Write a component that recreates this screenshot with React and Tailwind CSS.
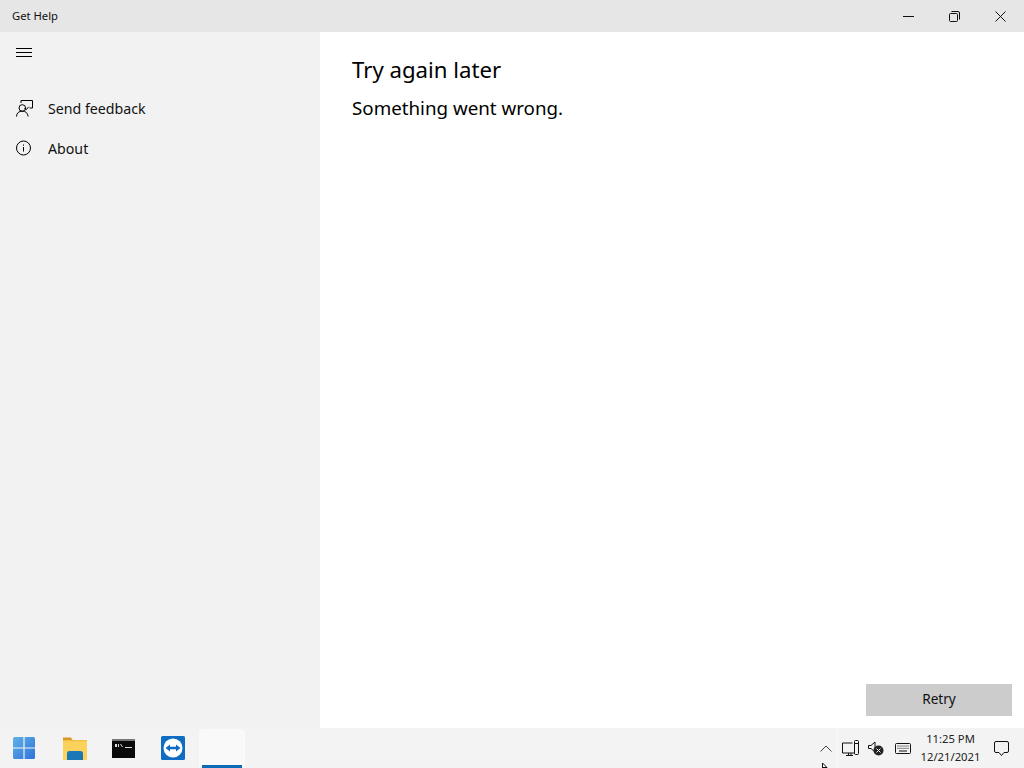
import React from "react";

const font = { fontFamily: '"Noto Sans", "Open Sans", sans-serif' };

function Hamburger() {
  return (
    <svg width="16" height="12" viewBox="0 0 16 12" fill="none" stroke="#000" strokeWidth="1">
      <path d="M0 1.5h16M0 5.5h16M0 9.5h16" />
    </svg>
  );
}

function FeedbackIcon() {
  return (
    <svg width="17" height="17" viewBox="0 0 17 17" fill="none" stroke="#000" strokeWidth="1">
      <path d="M5 3V.5h11.5V8h-3" />
      <path d="M8.5 8.2l1.6 1.6 2.6-3" />
      <circle cx="6.3" cy="8" r="3.3" />
      <path d="M.5 16.5c0-3.4 2.5-5.4 5.8-5.4s5.5 2 5.8 5.4" />
    </svg>
  );
}

function InfoIcon() {
  return (
    <svg width="16" height="16" viewBox="0 0 16 16" fill="none" stroke="#000" strokeWidth="1">
      <circle cx="7.5" cy="8" r="7" />
      <path d="M7.5 7v4.5M7.5 4.5v1.2" />
    </svg>
  );
}

function NavItem({ icon, label }) {
  return (
    <div className="flex items-center h-10 pl-4">
      <div className="w-8 flex items-center">{icon}</div>
      <span className="pt-[2px] text-[14.2px] text-[#111]">{label}</span>
    </div>
  );
}

function WinButtons() {
  return (
    <div className="flex items-center h-full pr-px">
      <div className="w-[46px] flex justify-center">
        <svg width="11" height="11" viewBox="0 0 11 11" stroke="#111" fill="none"><path d="M0 5.5h11" /></svg>
      </div>
      <div className="w-[46px] flex justify-center">
        <svg width="11" height="11" viewBox="0 0 11 11" stroke="#111" fill="none">
          <rect x=".5" y="2.5" width="8" height="8" rx="1" />
          <path d="M2.5 .5h6.5a1.5 1.5 0 0 1 1.5 1.5v6.5" />
        </svg>
      </div>
      <div className="w-[46px] flex justify-center">
        <svg width="11" height="11" viewBox="0 0 11 11" stroke="#111" fill="none"><path d="M.5 .5l10 10M10.5 .5l-10 10" /></svg>
      </div>
    </div>
  );
}

function StartIcon() {
  return (
    <svg width="22" height="22" viewBox="0 0 22 22" className="mr-[2px]">
      <defs>
        <linearGradient id="startGrad" x1="0" y1="0" x2="1" y2="1">
          <stop offset="0" stopColor="#5fb2e8" />
          <stop offset="1" stopColor="#2f72d8" />
        </linearGradient>
      </defs>
      <rect width="22" height="22" rx="1.5" fill="url(#startGrad)" />
      <path d="M11 0v22M0 11h22" stroke="#f3f3f3" strokeWidth="1.2" />
    </svg>
  );
}

function FolderIcon() {
  return (
    <svg width="24" height="23" viewBox="0 0 24 23" className="ml-[1px]">
      <path d="M0 .5h8l1.5 2.5H0z" fill="#d9991f" />
      <rect y="3" width="24" height="20" fill="#fbd25c" />
      <path d="M0 3h24v1.5H0z" fill="#f0c24a" />
      <path d="M4 23v-6.5q0-2.5 2.5-2.5h11q2.5 0 2.5 2.5V23z" fill="#1a78b8" />
    </svg>
  );
}

function CmdIcon() {
  return (
    <svg width="23" height="19" viewBox="0 0 23 19">
      <rect width="23" height="19" fill="#0a0a0a" />
      <rect width="23" height="2" fill="#777" />
      <path d="M3 5h2v3H3zM6 5h1v3H6zM9 5l2 3h-1L8 5z" fill="#ddd" />
      <path d="M13 8.5h7" stroke="#ddd" strokeWidth="1" />
    </svg>
  );
}

function TeamViewerIcon() {
  return (
    <svg width="24" height="24" viewBox="0 0 24 24">
      <rect width="24" height="24" rx="1.5" fill="#0f6cc4" />
      <circle cx="12" cy="12" r="9.5" fill="#fff" />
      <path d="M4.5 12l4.5-3.6v2.3h6V8.4l4.5 3.6-4.5 3.6v-2.3H9v2.3z" fill="#0f6cc4" />
    </svg>
  );
}

function TaskCell({ children }) {
  return <div className="w-[49.5px] h-full flex items-center justify-center">{children}</div>;
}

function Tray() {
  return (
    <div className="flex items-center h-full pr-[3px]">
      <div className="w-[22px] flex justify-center">
        <svg width="12" height="7" viewBox="0 0 12 7" fill="none" stroke="#444"><path d="M.5 6.5L6 1l5.5 5.5" /></svg>
      </div>
      <div className="w-px h-full bg-[#f8f8f8]" />
      <div className="w-[25px] flex justify-center">
        <svg width="17" height="17" viewBox="0 0 17 17" fill="none" stroke="#111">
          <path d="M10.5 3H.5v10h12" />
          <path d="M4 15.5h7M6.5 13v2.5M9 13v2.5" />
          <rect x="12.5" y=".5" width="4" height="14" rx="1" />
          <path d="M12.5 3.5h4" />
        </svg>
      </div>
      <div className="w-[26px] flex justify-center">
        <svg width="16" height="16" viewBox="0 0 16 16" fill="none" stroke="#111">
          <path d="M.5 5.5h2.5L7 2v10L3 8.5H.5z" />
          <circle cx="10.5" cy="10.5" r="5" fill="#222" stroke="none" />
          <path d="M8.5 8.5l4 4M12.5 8.5l-4 4" stroke="#f3f3f3" />
        </svg>
      </div>
      <div className="w-[28px] flex justify-center">
        <svg width="16" height="11" viewBox="0 0 16 11" fill="none" stroke="#111">
          <rect x=".5" y=".5" width="15" height="10" rx="1" />
          <path d="M2.5 3h11M2.5 5.3h11" strokeDasharray="1 1" />
          <path d="M4 8h8" />
        </svg>
      </div>
      <div className="w-[61px] ml-[3px] flex flex-col items-center text-[11.25px] leading-[18px] text-[#222]">
        <span>11:25 PM</span>
        <span>12/21/2021</span>
      </div>
      <div className="w-10 flex justify-center">
        <svg width="15" height="15" viewBox="0 0 15 15" fill="none" stroke="#111">
          <path d="M2 .5h11A1.5 1.5 0 0 1 14.5 2v8a1.5 1.5 0 0 1-1.5 1.5H10L7.5 14.5 5 11.5H2A1.5 1.5 0 0 1 .5 10V2A1.5 1.5 0 0 1 2 .5z" />
        </svg>
      </div>
    </div>
  );
}

export default function App() {
  return (
    <div className="w-[1024px] h-[768px] flex flex-col bg-white overflow-hidden relative" style={font}>
      <div className="h-8 bg-[#e6e6e6] flex items-center justify-between pl-3">
        <span className="text-[11.25px] text-[#111]">Get Help</span>
        <WinButtons />
      </div>

      <div className="flex-1 flex min-h-0">
        <div className="w-80 bg-[#f2f2f2]">
          <div className="h-[42px] flex items-center pl-4">
            <Hamburger />
          </div>
          <div className="pt-[14px]">
            <NavItem icon={<FeedbackIcon />} label="Send feedback" />
            <NavItem icon={<InfoIcon />} label="About" />
          </div>
        </div>
        <div className="flex-1 flex flex-col justify-between pl-8 pr-3 pb-3 pt-[22px]">
          <div className="text-black">
            <h1 className="text-[22.2px] leading-[32px]">Try again later</h1>
            <p className="text-[18.75px] leading-[26px] mt-[9px]">Something went wrong.</p>
          </div>
          <button className="self-end w-[146px] h-8 pb-[1px] bg-[#cccccc] text-[13.6px] text-[#111]">Retry</button>
        </div>
      </div>

      <div className="h-10 bg-[#f3f3f3] flex items-center justify-between">
        <div className="flex items-center h-full">
          <TaskCell><StartIcon /></TaskCell>
          <TaskCell><FolderIcon /></TaskCell>
          <TaskCell><CmdIcon /></TaskCell>
          <TaskCell><TeamViewerIcon /></TaskCell>
          <div className="w-[46px] h-[39px] mt-px ml-[1px] bg-[#f9f9f9] flex flex-col justify-end items-center rounded-t-sm">
            <div className="w-10 h-[3px] bg-[#0a6cb8]" />
          </div>
        </div>
        <Tray />
      </div>

      <svg className="absolute left-[822px] top-[763px]" width="6" height="5" viewBox="0 0 6 5">
        <path d="M.5 0v5M.5 0L5 4.5H.5" fill="#fff" stroke="#111" strokeWidth="1" />
      </svg>
    </div>
  );
}
